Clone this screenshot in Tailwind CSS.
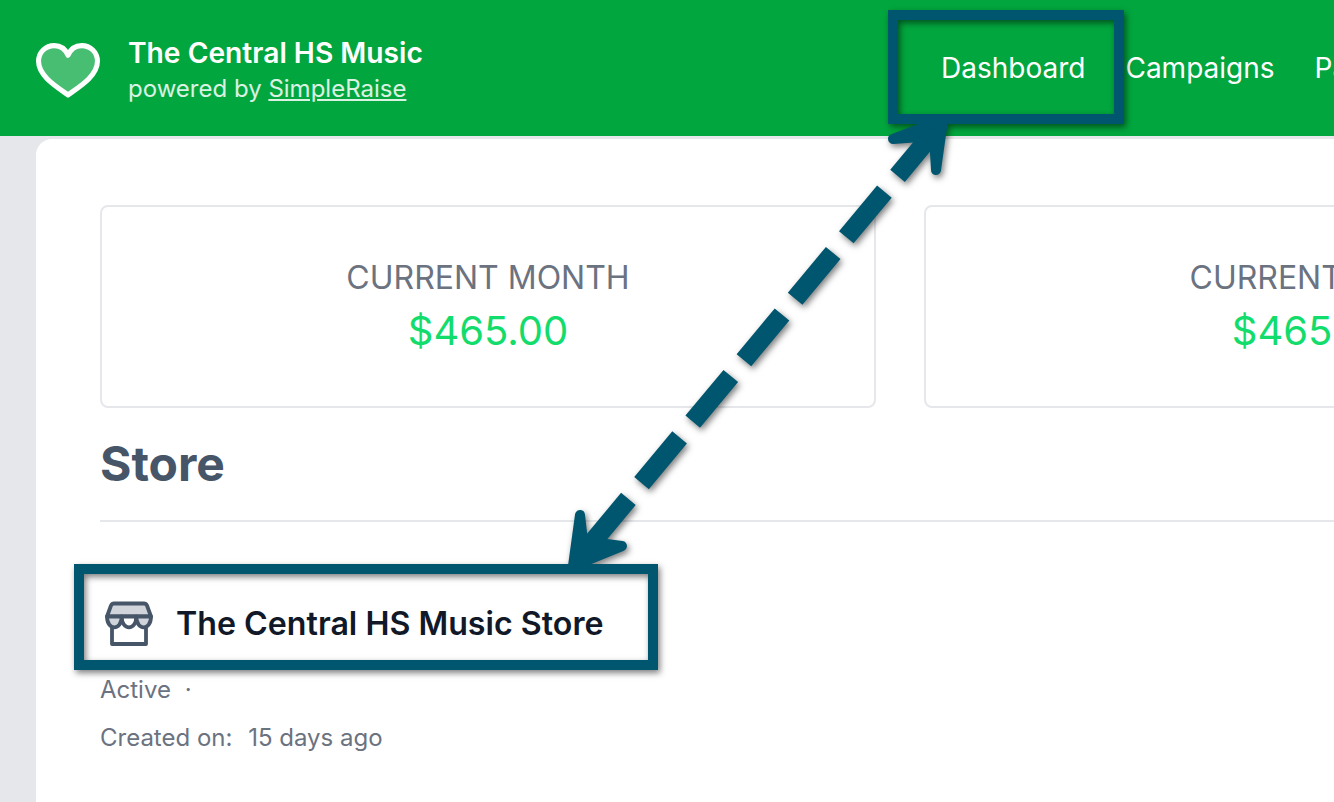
<!DOCTYPE html>
<html lang="en">
<head>
  <meta charset="UTF-8">
  <title>The Central HS Music - Dashboard</title>
  <script src="https://cdn.jsdelivr.net/npm/@tailwindcss/browser@4"></script>
</head>
<body class="relative w-[1334px] h-[802px] overflow-hidden bg-[#e5e7eb] font-['Inter',sans-serif]">
  <!-- header -->
  <header class="h-[136px] bg-[#02a63e] flex items-center justify-between overflow-hidden">
    <div class="flex items-center pl-[36px] pt-[4px] shrink-0">
      <svg class="w-[64px] h-[55px]" viewBox="0 0 63 54" fill="#ffffff" fill-opacity="0.28" stroke="#ffffff" stroke-width="5" stroke-linejoin="round">
        <path d="M31.5 51C22 44 2.5 33 2.5 18C2.5 9 9.5 2.5 18 2.5C24 2.5 29 6 31.5 12C34 6 39 2.5 45 2.5C53.5 2.5 60.5 9 60.5 18C60.5 33 41 44 31.5 51Z"/>
      </svg>
      <div class="ml-[28px]">
        <div class="text-[28.2px] leading-[37px] font-semibold text-white">The Central HS Music</div>
        <div class="text-[24px] leading-[34px] text-white/85">powered by <a href="#" class="underline">SimpleRaise</a></div>
      </div>
    </div>
    <nav class="flex items-center w-[434px] shrink-0 text-[28px] text-white whitespace-nowrap">
      <a href="#" class="ml-[41px]">Dashboard</a>
      <a href="#" class="ml-[40px]">Campaigns</a>
      <a href="#" class="ml-[40px]">Payments</a>
    </nav>
  </header>

  <!-- main panel -->
  <main class="pl-[36px] pt-[3px]">
    <div class="h-[700px] bg-white rounded-tl-[16px] border-l border-t border-white pl-[63px] pt-[65px]">
      <div class="flex gap-[48px] w-[1600px]">
        <div class="w-[776px] h-[203px] shrink-0 border-2 border-[#e5e7eb] rounded-[8px] flex flex-col items-center justify-center">
          <div class="text-[32px] leading-[48px] text-[#6b7280]">CURRENT MONTH</div>
          <div class="text-[40px] leading-[58px] text-[#12dc6b]">$465.00</div>
        </div>
        <div class="w-[776px] h-[203px] shrink-0 border-2 border-[#e5e7eb] rounded-[8px] flex flex-col items-center justify-center">
          <div class="text-[32px] leading-[48px] text-[#6b7280]">CURRENT YEAR</div>
          <div class="text-[40px] leading-[58px] text-[#12dc6b]">$465.00</div>
        </div>
      </div>
      <h2 class="mt-[26px] text-[48px] leading-[60px] font-bold text-[#475569]">Store</h2>
      <hr class="mt-[26px] border-t-2 border-[#e5e7eb]">
      <div class="mt-[78px] flex items-center h-[48px]">
        <svg class="ml-[5px] w-[48px] h-[46px]" viewBox="0 0 48 46" stroke="#475569" stroke-width="3.8" stroke-linejoin="round" stroke-linecap="round">
          <path d="M7 21V43H41V21" fill="#ffffff"/>
          <path d="M9 2.5H39Q41 2.5 42 4.5L46 15.5H2L6 4.5Q7 2.5 9 2.5Z" fill="#d1d5db"/>
          <path d="M2 15.5C2 30 16.7 30 16.7 15.5Z" fill="#d1d5db"/>
          <path d="M16.7 15.5C16.7 30 31.3 30 31.3 15.5Z" fill="#ffffff"/>
          <path d="M31.3 15.5C31.3 30 46 30 46 15.5Z" fill="#d1d5db"/>
        </svg>
        <h3 class="ml-[23px] text-[32.2px] leading-[44px] font-semibold text-[#111827]">The Central HS Music Store</h3>
      </div>
      <div class="mt-[24px] text-[24px] leading-[36px] text-[#6b7280]">Active <span class="ml-[7px]">·</span></div>
      <div class="mt-[12px] text-[24px] leading-[36px] text-[#6b7280]">Created on: <span class="ml-[9px]">15 days ago</span></div>
    </div>
  </main>

  <!-- annotation drawn on top of the screenshot -->
  <svg class="absolute left-0 top-0 w-[1334px] h-[802px] drop-shadow-[2px_3px_3px_rgba(0,0,0,0.5)]" viewBox="0 0 1334 802" fill="none" stroke="#00566f">
    <rect x="893" y="15" width="226" height="104" stroke-width="10"/>
    <rect x="79" y="569" width="574" height="96" stroke-width="10"/>
    <line x1="934" y1="132" x2="590" y2="545" stroke-width="19" stroke-dasharray="57 20.5 59.5 20.5 59.5 20.5 59.5 20.5 59.5 20.5 59.5 20.5 59.5 200"/>
    <path d="M893 139L943 120L936 170L934 136Z" fill="#00566f" stroke-width="10" stroke-linejoin="round"/>
    <path d="M580 515L583 541L622 546L573 566Z" fill="#00566f" stroke-width="10" stroke-linejoin="round"/>
  </svg>
</body>
</html>
